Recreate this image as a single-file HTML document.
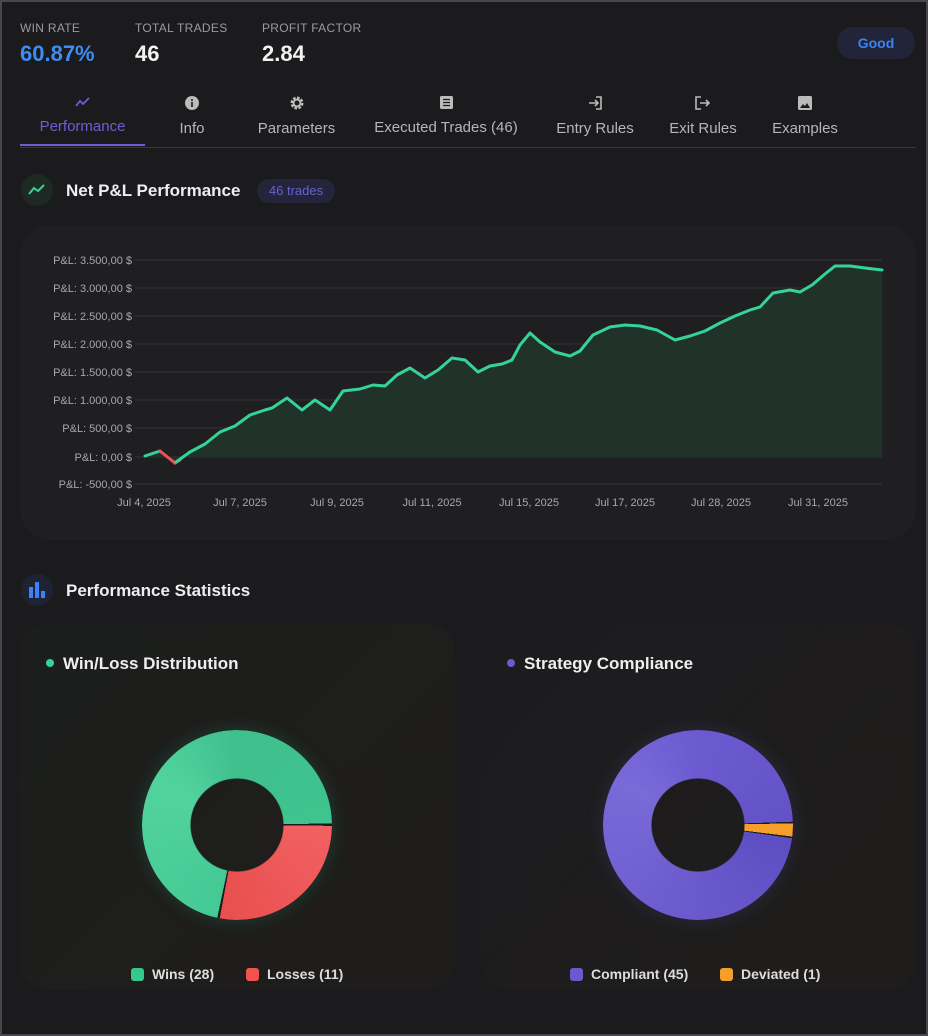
<!DOCTYPE html>
<html><head><meta charset="utf-8"><style>
*{margin:0;padding:0;box-sizing:border-box}
body{width:928px;height:1036px;background:#4a4650;font-family:"Liberation Sans",sans-serif;overflow:hidden}
.frame{position:absolute;left:2px;top:2px;width:924px;height:1032px;background:#1b1b1e}
.abs{position:absolute}
.lbl{font-size:12px;color:#9b9aa0;letter-spacing:.3px;top:21px}
.val{font-size:22px;font-weight:bold;color:#f2f2f2;top:41px}
.tab{position:absolute;top:96px;text-align:center;color:#b5b5ba;font-size:15px}
.tab svg{display:block;margin:0 auto 10px}
.card{position:absolute;border-radius:30px;background:#1f1f21}
.title{font-size:17px;font-weight:bold;color:#eee}
.donut{position:absolute;width:190px;height:190px;border-radius:50%;-webkit-mask:radial-gradient(circle,transparent 46px,#000 47px);mask:radial-gradient(circle,transparent 46px,#000 47px)}
.leg{position:absolute;top:966px;font-size:14px;color:#ddd;font-weight:bold}
.sq{display:inline-block;width:13px;height:13px;border-radius:3px;vertical-align:-2px;margin-right:8px}
</style></head><body><div class="frame"></div>
<div class="abs lbl" style="left:20px">WIN RATE</div>
<div class="abs val" style="left:20px;color:#3b8ef0">60.87%</div>
<div class="abs lbl" style="left:135px">TOTAL TRADES</div>
<div class="abs val" style="left:135px">46</div>
<div class="abs lbl" style="left:262px">PROFIT FACTOR</div>
<div class="abs val" style="left:262px">2.84</div>
<div class="abs" style="left:837px;top:27px;width:78px;height:32px;border-radius:16px;background:#22243a;color:#3b82f6;font-size:14px;font-weight:bold;text-align:center;line-height:32px">Good</div>

<div class="tab" style="left:20px;width:125px;color:#6b5fd6"><svg width="16" height="12" viewBox="0 0 16 12"><path d="M1 10 L5 5 L8 8 L14 2" stroke="#6b5fd6" stroke-width="1.8" fill="none"/></svg>Performance</div>
<div class="tab" style="left:162px;width:60px"><svg width="14" height="14" viewBox="0 0 14 14"><circle cx="7" cy="7" r="7" fill="#bbb"/><rect x="6.2" y="6" width="1.6" height="5" fill="#1b1b1e"/><circle cx="7" cy="4" r="1" fill="#1b1b1e"/></svg>Info</div>
<div class="tab" style="left:247px;width:99px"><svg width="14" height="14" viewBox="0 0 14 14"><circle cx="7" cy="7" r="5" fill="none" stroke="#bbb" stroke-width="3" stroke-dasharray="2.5 1.4"/><circle cx="7" cy="7" r="3.5" fill="none" stroke="#bbb" stroke-width="2"/></svg>Parameters</div>
<div class="tab" style="left:361px;width:170px"><svg width="13" height="13" viewBox="0 0 13 13"><rect x="0" y="0" width="13" height="13" rx="1.5" fill="#bbb"/><path d="M3 3.5H10M3 6.5H10M3 9.5H10" stroke="#1b1b1e" stroke-width="1.2"/></svg>Executed Trades (46)</div>
<div class="tab" style="left:547px;width:96px"><svg width="16" height="14" viewBox="0 0 16 14"><path d="M9 1H14V13H9M2 7H11M8 4L11 7L8 10" stroke="#bbb" stroke-width="1.6" fill="none"/></svg>Entry Rules</div>
<div class="tab" style="left:662px;width:82px"><svg width="16" height="14" viewBox="0 0 16 14"><path d="M6 1H1V13H6M5 7H14M11 4L14 7L11 10" stroke="#bbb" stroke-width="1.6" fill="none"/></svg>Exit Rules</div>
<div class="tab" style="left:763px;width:84px"><svg width="14" height="14" viewBox="0 0 14 14"><rect width="14" height="14" rx="1.5" fill="#bbb"/><path d="M2 12L5 8L7 10L9 7L12 12Z" fill="#1b1b1e"/></svg>Examples</div>
<div class="abs" style="left:20px;top:147px;width:896px;height:1px;background:#38383c"></div>
<div class="abs" style="left:20px;top:144px;width:125px;height:2px;background:#6b5fd6"></div>

<div class="abs" style="left:21px;top:174px;width:32px;height:32px;border-radius:50%;background:#1c2a23"></div>
<svg class="abs" style="left:28px;top:183px" width="18" height="13" viewBox="0 0 18 13"><path d="M1 11L6 5L10 8L16 2" stroke="#34d399" stroke-width="2" fill="none"/></svg>
<div class="abs title" style="left:66px;top:181px">Net P&amp;L Performance</div>
<div class="abs" style="left:257px;top:179px;width:78px;height:24px;border-radius:12px;background:#24243a;color:#6b5fd6;font-size:13px;text-align:center;line-height:24px">46 trades</div>

<div class="card" style="left:20px;top:225px;width:896px;height:315px"></div>
<svg class="abs" style="left:0;top:0" width="928" height="540">
<g stroke="#333336" stroke-width="1">
<line x1="135" x2="882" y1="260" y2="260"/><line x1="135" x2="882" y1="288" y2="288"/><line x1="135" x2="882" y1="316" y2="316"/><line x1="135" x2="882" y1="344" y2="344"/><line x1="135" x2="882" y1="372" y2="372"/><line x1="135" x2="882" y1="400" y2="400"/><line x1="135" x2="882" y1="428" y2="428"/><line x1="135" x2="882" y1="457" y2="457"/><line x1="135" x2="882" y1="484" y2="484"/></g>
<g font-size="11" fill="#a8a8ac" text-anchor="end" font-family="Liberation Sans">
<text x="132" y="264">P&amp;L: 3.500,00 $</text><text x="132" y="292">P&amp;L: 3.000,00 $</text><text x="132" y="320">P&amp;L: 2.500,00 $</text><text x="132" y="348">P&amp;L: 2.000,00 $</text><text x="132" y="376">P&amp;L: 1.500,00 $</text><text x="132" y="404">P&amp;L: 1.000,00 $</text><text x="132" y="432">P&amp;L: 500,00 $</text><text x="132" y="461">P&amp;L: 0,00 $</text><text x="132" y="488">P&amp;L: -500,00 $</text></g>
<g font-size="11" fill="#a8a8ac" text-anchor="middle" font-family="Liberation Sans">
<text x="144" y="506">Jul 4, 2025</text><text x="240" y="506">Jul 7, 2025</text><text x="337" y="506">Jul 9, 2025</text><text x="432" y="506">Jul 11, 2025</text><text x="529" y="506">Jul 15, 2025</text><text x="625" y="506">Jul 17, 2025</text><text x="721" y="506">Jul 28, 2025</text><text x="818" y="506">Jul 31, 2025</text></g>
<path d="M145 456 L160 451 L175 463 L190 452 L205 444 L220 432 L235 426 L250 415 L265 410 L272 408 L287 398 L302 410 L315 400 L330 410 L343 391 L360 389 L373 385 L385 386 L397 375 L410 368 L425 378 L438 370 L452 358 L465 360 L478 372 L490 366 L502 364 L512 360 L520 345 L530 333 L540 342 L555 352 L570 356 L580 351 L593 335 L610 327 L625 325 L640 326 L657 330 L675 340 L690 336 L705 331 L720 323 L735 316 L750 310 L760 307 L773 293 L790 290 L800 292 L812 285 L825 274 L835 266 L850 266 L865 268 L882 270 L882 457 L145 457Z" fill="#21322a"/>
<path d="M190 452 L205 444 L220 432 L235 426 L250 415 L265 410 L272 408 L287 398 L302 410 L315 400 L330 410 L343 391 L360 389 L373 385 L385 386 L397 375 L410 368 L425 378 L438 370 L452 358 L465 360 L478 372 L490 366 L502 364 L512 360 L520 345 L530 333 L540 342 L555 352 L570 356 L580 351 L593 335 L610 327 L625 325 L640 326 L657 330 L675 340 L690 336 L705 331 L720 323 L735 316 L750 310 L760 307 L773 293 L790 290 L800 292 L812 285 L825 274 L835 266 L850 266 L865 268 L882 270" stroke="#34d399" stroke-width="3" fill="none" stroke-linejoin="round" stroke-linecap="round"/>
<path d="M145 456 L160 451" stroke="#34d399" stroke-width="3" fill="none" stroke-linecap="round"/>
<path d="M160 451 L175 463 L180 460" stroke="#ef5350" stroke-width="3" fill="none" stroke-linecap="round"/>
<path d="M176 462 L190 452" stroke="#34d399" stroke-width="3" fill="none" stroke-linecap="round"/>
</svg>

<div class="abs" style="left:21px;top:574px;width:32px;height:32px;border-radius:50%;background:#1e2334"></div>
<svg class="abs" style="left:28px;top:581px" width="18" height="17" viewBox="0 0 18 17"><rect x="1" y="6" width="4" height="11" fill="#3b82f6"/><rect x="7" y="1" width="4" height="16" fill="#3b82f6"/><rect x="13" y="10" width="4" height="7" fill="#3b82f6"/></svg>
<div class="abs title" style="left:66px;top:581px">Performance Statistics</div>

<div class="card" style="left:20px;top:623px;width:435px;height:367px;background:linear-gradient(135deg,#1c1e1d,#1f1d1b)"></div>
<div class="card" style="left:481px;top:623px;width:435px;height:367px;background:linear-gradient(135deg,#1c1c1f,#1f1d1b)"></div>
<div class="abs" style="left:46px;top:659px;width:8px;height:8px;border-radius:50%;background:#34d399"></div>
<div class="abs title" style="left:63px;top:654px">Win/Loss Distribution</div>
<div class="abs" style="left:507px;top:659px;width:8px;height:8px;border-radius:50%;background:#6a5acd"></div>
<div class="abs title" style="left:524px;top:654px">Strategy Compliance</div>

<div class="abs" style="left:142px;top:730px;width:190px;height:190px;border-radius:50%;box-shadow:0 0 18px rgba(52,211,153,.18)"></div>
<div class="donut" style="left:142px;top:730px;background:conic-gradient(#3fbf8c 0deg,#3fc48f 89deg,#1b1b1e 89deg 90.5deg,#f26060 90.5deg,#e94f4f 190.5deg,#1b1b1e 190.5deg 192deg,#45c994 192deg,#52d39e 300deg,#3fbf8c 360deg)"></div>
<div class="abs" style="left:603px;top:730px;width:190px;height:190px;border-radius:50%;box-shadow:0 0 18px rgba(106,90,205,.2)"></div>
<div class="donut" style="left:603px;top:730px;background:conic-gradient(#6b5ad0 0deg,#6452c8 88deg,#1b1b1e 88deg 89deg,#f59e2a 89deg 97deg,#1b1b1e 97deg 98deg,#5e4ec4 98deg,#7a6ad8 300deg,#6b5ad0 360deg)"></div>

<div class="leg" style="left:131px"><span class="sq" style="background:#34c88a"></span>Wins (28)</div>
<div class="leg" style="left:246px"><span class="sq" style="background:#ef5350"></span>Losses (11)</div>
<div class="leg" style="left:570px"><span class="sq" style="background:#6a5acd"></span>Compliant (45)</div>
<div class="leg" style="left:720px"><span class="sq" style="background:#f59e2a"></span>Deviated (1)</div>
</body></html>
